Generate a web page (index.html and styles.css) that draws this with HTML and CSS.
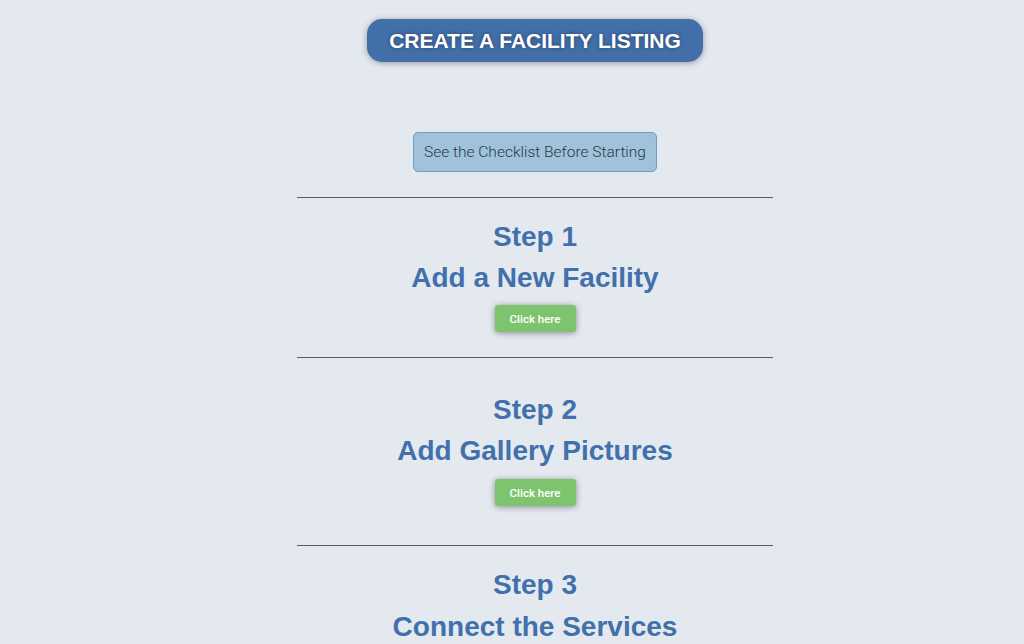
FILE: index.html
```html
<!DOCTYPE html>
<html>
<head>
<meta charset="utf-8">
<link rel="stylesheet" href="styles.css">
</head>
<body>
<main class="page">
  <div class="title-wrap"><div class="title-btn">CREATE A FACILITY LISTING</div></div>
  <div class="check-wrap"><a class="check-btn">See the Checklist Before Starting</a></div>
  <hr class="rule">
  <section class="step s1">
    <h2 class="step-num">Step 1</h2>
    <h2 class="step-title">Add a New Facility</h2>
    <a class="go-btn">Click here</a>
  </section>
  <hr class="rule">
  <section class="step s2">
    <h2 class="step-num">Step 2</h2>
    <h2 class="step-title">Add Gallery Pictures</h2>
    <a class="go-btn">Click here</a>
  </section>
  <hr class="rule">
  <section class="step s3">
    <h2 class="step-num">Step 3</h2>
    <h2 class="step-title">Connect the Services</h2>
  </section>
</main>
</body>
</html>
```
FILE: styles.css
```css
html, body { margin: 0; padding: 0; }
body {
  background: #e4e9f0;
  font-family: "Liberation Sans", Arial, sans-serif;
  padding-left: 46px;
  overflow: hidden;
  height: 644px;
}
.page {
  width: 476px;
  margin: 0 auto;
  display: flex;
  flex-direction: column;
  align-items: center;
}
.title-wrap { padding-top: 19px; }
.title-btn {
  width: 336px;
  height: 43px;
  box-sizing: border-box;
  background: #426ea9;
  border-radius: 15px;
  color: #fff;
  font-weight: bold;
  font-size: 21px;
  display: flex;
  align-items: center;
  justify-content: center;
  text-shadow: 0 0 4px rgba(0,0,0,0.35);
  box-shadow: 0 1px 6px rgba(0,0,0,0.35);
}
.check-wrap { padding-top: 70px; }
.check-btn {
  display: flex;
  align-items: center;
  justify-content: center;
  width: 244px;
  height: 40px;
  box-sizing: border-box;
  background: #a1c3da;
  border: 1px solid #6b9fc7;
  border-radius: 5px;
  font-family: Roboto, sans-serif;
  font-weight: 300;
  font-size: 15.5px;
  color: #26384c;
}
.rule {
  width: 476px;
  margin: 0;
  border: 0;
  border-top: 1px solid #5a5a5a;
  height: 0;
}
.check-wrap + .rule { margin-top: 25px; }
.step {
  display: flex;
  flex-direction: column;
  align-items: center;
  width: 100%;
}
.step h2 {
  margin: 0;
  color: #4270ab;
  font-weight: bold;
  font-size: 28px;
  line-height: 41px;
}
.s1 { padding-top: 18px; padding-bottom: 25px; }
.s1 .go-btn { margin-top: 7px; }
.s2 { padding-top: 31px; padding-bottom: 39px; }
.s2 .go-btn { margin-top: 8px; }
.s3 { padding-top: 18px; }
.s3 .step-title { line-height: 43px; }
.go-btn {
  margin-top: 6px;
  width: 81px;
  height: 27px;
  background: #7ec46e;
  border-radius: 3px;
  color: #fff;
  font-family: Roboto, sans-serif;
  font-weight: 500;
  font-size: 11.5px;
  display: flex;
  align-items: center;
  justify-content: center;
  box-shadow: 0 1px 6px rgba(0,0,0,0.4);
}
```
